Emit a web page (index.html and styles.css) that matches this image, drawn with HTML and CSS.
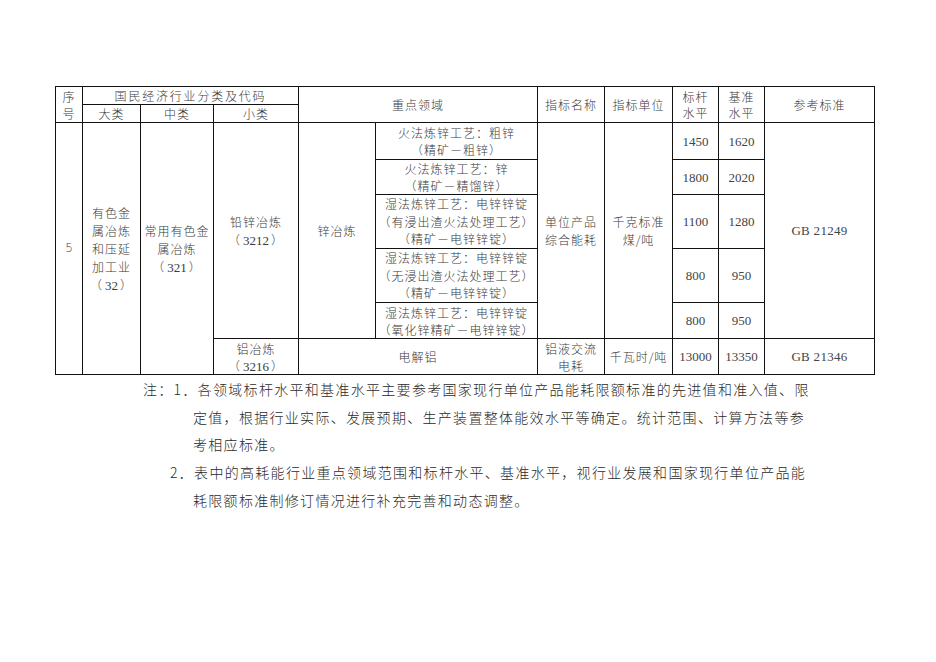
FILE: index.html
```html
<!DOCTYPE html>
<html lang="zh-CN">
<head>
<meta charset="utf-8">
<title>高耗能行业重点领域能效标杆水平和基准水平</title>
<link rel="stylesheet" href="styles.css">
</head>
<body>
<div class="page">
  <table class="grid">
    <colgroup>
      <col class="c-seq">
      <col class="c-big">
      <col class="c-mid">
      <col class="c-small">
      <col class="c-field">
      <col class="c-sub">
      <col class="c-name">
      <col class="c-unit">
      <col class="c-bench">
      <col class="c-base">
      <col class="c-ref">
    </colgroup>
    <tr class="h1">
      <td rowspan="2">序<br>号</td>
      <td colspan="3" class="wide">国民经济行业分类及代码</td>
      <td colspan="2" rowspan="2">重点领域</td>
      <td rowspan="2">指标名称</td>
      <td rowspan="2">指标单位</td>
      <td rowspan="2" class="tight">标杆<br>水平</td>
      <td rowspan="2" class="tight">基准<br>水平</td>
      <td rowspan="2">参考标准</td>
    </tr>
    <tr class="h2">
      <td>大类</td>
      <td>中类</td>
      <td>小类</td>
    </tr>
    <tr class="r1">
      <td rowspan="6" class="seq">5</td>
      <td rowspan="6" class="tall">有色金<br>属冶炼<br>和压延<br>加工业<br>（<span class="d">32</span>）</td>
      <td rowspan="6" class="tall">常用有色金<br>属冶炼<br>（<span class="d">321</span>）</td>
      <td rowspan="5" class="tall">铅锌冶炼<br>（<span class="d">3212</span>）</td>
      <td rowspan="5">锌冶炼</td>
      <td>火法炼锌工艺：粗锌<br>（精矿－粗锌）</td>
      <td rowspan="5" class="tall">单位产品<br>综合能耗</td>
      <td rowspan="5" class="tall">千克标准<br>煤/吨</td>
      <td class="num">1450</td>
      <td class="num">1620</td>
      <td rowspan="5" class="num gb">GB 21249</td>
    </tr>
    <tr class="r2">
      <td>火法炼锌工艺：锌<br>（精矿－精馏锌）</td>
      <td class="num">1800</td>
      <td class="num">2020</td>
    </tr>
    <tr class="r3">
      <td>湿法炼锌工艺：电锌锌锭<br>（有浸出渣火法处理工艺）<br>（精矿－电锌锌锭）</td>
      <td class="num">1100</td>
      <td class="num">1280</td>
    </tr>
    <tr class="r4">
      <td>湿法炼锌工艺：电锌锌锭<br>（无浸出渣火法处理工艺）<br>（精矿－电锌锌锭）</td>
      <td class="num">800</td>
      <td class="num">950</td>
    </tr>
    <tr class="r5">
      <td>湿法炼锌工艺：电锌锌锭<br>（氧化锌精矿－电锌锌锭）</td>
      <td class="num">800</td>
      <td class="num">950</td>
    </tr>
    <tr class="r6">
      <td>铝冶炼<br>（<span class="d">3216</span>）</td>
      <td colspan="2">电解铝</td>
      <td>铝液交流<br>电耗</td>
      <td>千瓦时/吨</td>
      <td class="num">13000</td>
      <td class="num">13350</td>
      <td class="num gb">GB 21346</td>
    </tr>
  </table>

  <div class="notes">
    <p class="note first">注：1．各领域标杆水平和基准水平主要参考国家现行单位产品能耗限额标准的先进值和准入值、限<br>定值，根据行业实际、发展预期、生产装置整体能效水平等确定。统计范围、计算方法等参<br>考相应标准。</p>
    <p class="note second">2．表中的高耗能行业重点领域范围和标杆水平、基准水平，视行业发展和国家现行单位产品能<br>耗限额标准制修订情况进行补充完善和动态调整。</p>
  </div>
</div>
</body>
</html>
```

FILE: styles.css
```css
html, body {
  margin: 0;
  padding: 0;
  background: #ffffff;
}

.page {
  padding: 86px 0 0 55px;
  font-family: "Noto Sans CJK SC", "Liberation Serif", sans-serif;
  color: #3a3a3a;
}

.grid {
  border-collapse: collapse;
  table-layout: fixed;
  width: 820px;
  font-size: 12px;
  letter-spacing: 1px;
  line-height: 17px;
  font-weight: 300;
}

.grid td {
  border: 1px solid #111;
  padding: 0;
  text-align: center;
  vertical-align: middle;
  white-space: nowrap;
  overflow: hidden;
}

.c-seq { width: 27px; }
.c-big { width: 58px; }
.c-mid { width: 73px; }
.c-small { width: 85px; }
.c-field { width: 77px; }
.c-sub { width: 162px; }
.c-name { width: 67px; }
.c-unit { width: 68px; }
.c-bench { width: 46px; }
.c-base { width: 46px; }
.c-ref { width: 110px; }

.h1 { height: 18px; }
.h2 { height: 18px; }
.tight { line-height: 16px; }
.grid .wide { letter-spacing: 1.8px; }

.r1 { height: 37px; }
.r2 { height: 35px; }
.r3 { height: 54px; }
.r4 { height: 54px; }
.r5 { height: 36px; }
.r6 { height: 36px; }

.r3 td, .r4 td { line-height: 17.5px; }
.grid .tall { line-height: 18px; }

.grid .num {
  font-family: "Liberation Serif", serif;
  font-size: 13px;
  letter-spacing: 0;
  color: #444;
  font-weight: 400;
}

.grid .gb {
  letter-spacing: 0.3px;
}

.grid .seq {
  font-family: "DejaVu Sans", sans-serif;
  font-size: 12px;
  letter-spacing: 0;
  color: #444;
}

.d {
  font-family: "Liberation Serif", serif;
  letter-spacing: 0;
  font-size: 13px;
  font-weight: 400;
  line-height: 1;
  margin: 0 2px;
}

.notes {
  margin: 1px 0 0 88px;
  font-size: 14px;
  line-height: 27.7px;
  letter-spacing: 1.3px;
  font-weight: 300;
  color: #2a2a2a;
}

.note {
  margin: 0;
  padding-left: 50px;
  white-space: nowrap;
}

.note.first {
  text-indent: -50px;
}

.note.second {
  text-indent: -23px;
}
```
